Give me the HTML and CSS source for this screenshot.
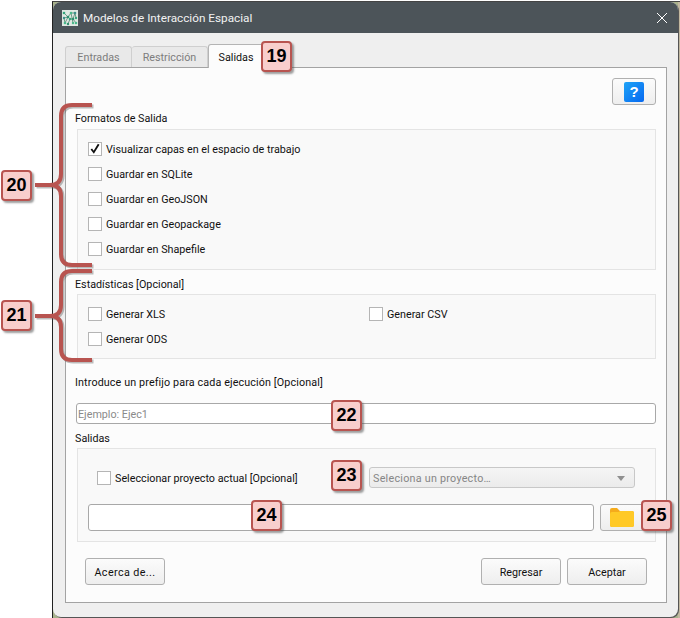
FILE: index.html
```html
<!DOCTYPE html>
<html>
<head>
    <title>Modelos de Interacción Espacial</title>
    <meta charset="UTF-8">
    <link rel="stylesheet" href="styles.css">
</head>

<body>
    <div class="desktop">
        <div class="dialog">
            <div class="titlebar">
                <svg class="logo" width="16" height="16" viewBox="0 0 16 16">
                    <rect width="16" height="16" fill="#dfe8e2"/>
                    <path d="M2 3L6 7L3 13M6 7L9 3L13 3L11 9L14 13M8 9L6 7M8 9L6 14M8 9L11 9M13 3L14 8M9 3L11 13M2 8L6 7M2 8L3 13" stroke="#6f9a86" stroke-width="1" fill="none"/>
                    <circle cx="2" cy="3" r="1.3" fill="#35a67c"/>
                    <circle cx="6" cy="7" r="1.3" fill="#2f8f6f"/>
                    <circle cx="9" cy="3" r="1.3" fill="#4bb98b"/>
                    <circle cx="13" cy="3" r="1.3" fill="#3d8f8a"/>
                    <circle cx="2" cy="8" r="1.2" fill="#3d8f8a"/>
                    <circle cx="3" cy="13" r="1.3" fill="#4bb98b"/>
                    <circle cx="8" cy="9" r="1.3" fill="#35a67c"/>
                    <circle cx="11" cy="9" r="1.3" fill="#2f8f6f"/>
                    <circle cx="14" cy="8" r="1.2" fill="#35a67c"/>
                    <circle cx="6" cy="14" r="1.2" fill="#2f8f6f"/>
                    <circle cx="11" cy="13" r="1.2" fill="#4bb98b"/>
                    <circle cx="14" cy="13" r="1.3" fill="#4bb98b"/>
                </svg>
                <span class="title">Modelos de Interacción Espacial</span>
                <svg class="close" width="12" height="12" viewBox="0 0 12 12">
                    <path d="M1 1L11 11M11 1L1 11" stroke="#fff" stroke-width="1"/>
                </svg>
            </div>

            <div class="content">
                <div class="tabs">
                    <div class="tab tab-first">Entradas</div>
                    <div class="tab tab-second">Restricción</div>
                    <div class="tab tab-active">Salidas</div>
                </div>

                <div class="pane">
                    <div class="help-row">
                        <button type="button" class="btn help-btn"><span class="help-icon">?</span></button>
                    </div>

                    <div class="group-label label-formats">Formatos de Salida</div>
                    <div class="group group-formats">
                        <div class="check-row"><span class="check"><svg width="13" height="13" viewBox="0 0 13 13"><path d="M2.5 7L5.2 10.5L10.5 2" stroke="#111" stroke-width="2" fill="none"/></svg></span><span class="check-text">Visualizar capas en el espacio de trabajo</span></div>
                        <div class="check-row"><span class="check"></span><span class="check-text">Guardar en SQLite</span></div>
                        <div class="check-row"><span class="check"></span><span class="check-text">Guardar en GeoJSON</span></div>
                        <div class="check-row"><span class="check"></span><span class="check-text">Guardar en Geopackage</span></div>
                        <div class="check-row"><span class="check"></span><span class="check-text">Guardar en Shapefile</span></div>
                    </div>

                    <div class="group-label label-stats">Estadísticas [Opcional]</div>
                    <div class="group group-stats">
                        <div class="check-row"><span class="check"></span><span class="check-text">Generar XLS</span></div>
                        <div class="check-row"><span class="check"></span><span class="check-text">Generar CSV</span></div>
                        <div class="check-row"><span class="check"></span><span class="check-text">Generar ODS</span></div>
                    </div>

                    <div class="group-label label-prefix">Introduce un prefijo para cada ejecución [Opcional]</div>
                    <input type="text" class="field prefix-field" placeholder="Ejemplo: Ejec1">

                    <div class="group-label label-output">Salidas</div>
                    <div class="group group-output">
                        <div class="project-row">
                            <div class="check-row project-check"><span class="check"></span><span class="check-text">Seleccionar proyecto actual [Opcional]</span></div>
                            <div class="combo">
                                <span>Seleciona un proyecto…</span>
                                <span class="arrow"></span>
                            </div>
                        </div>
                        <div class="path-row">
                            <input type="text" class="field path-field">
                            <button type="button" class="btn folder-btn">
                                <svg width="24" height="19" viewBox="0 0 24 19">
                                    <path d="M0 2a2 2 0 0 1 2-2h5l3 3h12a2 2 0 0 1 2 2v12a2 2 0 0 1-2 2H2a2 2 0 0 1-2-2z" fill="#f5ab1c"/>
                                    <path d="M0 6a2 2 0 0 1 2-2h7l1-1h12a2 2 0 0 1 2 2v12a2 2 0 0 1-2 2H2a2 2 0 0 1-2-2z" fill="#ffc926"/>
                                </svg>
                            </button>
                        </div>
                    </div>

                    <div class="footer">
                        <button type="button" class="btn footer-btn about-btn">Acerca de...</button>
                        <div class="footer-right">
                            <button type="button" class="btn footer-btn">Regresar</button>
                            <button type="button" class="btn footer-btn">Aceptar</button>
                        </div>
                    </div>
                </div>
            </div>
        </div>
    </div>

    <!-- callouts drawn over the screenshot -->
    <svg class="brackets" width="680" height="618" viewBox="0 0 680 618">
        <g class="bracket-shadow" transform="translate(1.5 1.5)">
            <path d="M92 105H72Q61 105 61 116V174Q61 185 50 185H35M50 185Q61 185 61 196V254Q61 265 72 265H92"/>
            <path d="M92 271H72Q61 271 61 282V305Q61 316 50 316H35M50 316Q61 316 61 327V349Q61 360 72 360H92"/>
        </g>
        <g class="bracket-line">
            <path d="M92 105H72Q61 105 61 116V174Q61 185 50 185H35M50 185Q61 185 61 196V254Q61 265 72 265H92"/>
            <path d="M92 271H72Q61 271 61 282V305Q61 316 50 316H35M50 316Q61 316 61 327V349Q61 360 72 360H92"/>
        </g>
    </svg>
    <div class="badge badge-19">19</div>
    <div class="badge badge-20">20</div>
    <div class="badge badge-21">21</div>
    <div class="badge badge-22">22</div>
    <div class="badge badge-23">23</div>
    <div class="badge badge-24">24</div>
    <div class="badge badge-25">25</div>
</body>
</html>
```

FILE: styles.css
```css
html, body {
    margin: 0;
    padding: 0;
}

body {
    position: relative;
    width: 680px;
    height: 618px;
    overflow: hidden;
    background-color: #fff;
    font-family: Roboto, sans-serif;
    font-size: 10.75px;
    color: #111;
}

.desktop {
    box-sizing: border-box;
    width: 628px;
    height: 617px;
    margin: 1px 0 0 52px;
    border-left: 1px solid #222;
    border-top: 1px solid #444;
    background: repeating-linear-gradient(90deg, #a8b28c 0, #a8b28c 30px, #c2b8a0 30px, #c2b8a0 60px, #8d9c78 60px, #8d9c78 85px);
}

.dialog {
    display: flex;
    flex-direction: column;
    width: 625px;
    height: 615px;
    border-radius: 8px;
    overflow: hidden;
    background-color: #efefef;
    box-shadow: 1px 1px 0 #555;
}

.titlebar {
    display: flex;
    align-items: center;
    flex-shrink: 0;
    height: 31px;
    padding: 0 9px;
    background-color: #4c5459;
    color: #f2f2f2;
}

.logo {
    margin-right: 5px;
}

.title {
    font-size: 11.75px;
}

.close {
    margin-left: auto;
    margin-right: 1px;
}

.content {
    padding: 11px 11px 0 12px;
}

.tabs {
    display: flex;
    align-items: flex-end;
    height: 23px;
}

.tab {
    box-sizing: border-box;
    display: flex;
    align-items: center;
    justify-content: center;
    height: 21px;
    padding-top: 1px;
    border: 1px solid #cfcfcf;
    border-bottom: none;
    border-radius: 3px 3px 0 0;
    background-color: #e9e9e9;
    color: #7d7d7d;
}

.tab-first {
    width: 67px;
}

.tab-second {
    width: 76px;
    border-left: none;
}

.tab-active {
    width: 66px;
    height: 24px;
    margin-bottom: -1px;
    position: relative;
    border-color: #b4b4b4;
    background-color: #fcfcfc;
    color: #111;
    padding-right: 10px;
}

.pane {
    box-sizing: border-box;
    width: 602px;
    height: 536px;
    padding: 0 10px 0 9px;
    border: 1px solid #a3a3a3;
    background-color: #fcfcfc;
}

.help-row {
    display: flex;
    justify-content: flex-end;
    padding-top: 10px;
}

.btn {
    box-sizing: border-box;
    border: 1px solid #b0b0b0;
    border-radius: 3px;
    background: linear-gradient(#fbfbfb, #eeeeee);
    font-family: Roboto, sans-serif;
    font-size: 10.75px;
    color: #111;
    padding: 0;
}

.help-btn {
    display: flex;
    align-items: center;
    justify-content: center;
    width: 44px;
    height: 27px;
}

.help-icon {
    display: block;
    width: 20px;
    height: 20px;
    border-radius: 2px;
    background: linear-gradient(135deg, #1fa4f7, #0668f0);
    color: #fff;
    font-family: "Liberation Sans", sans-serif;
    font-size: 15px;
    font-weight: bold;
    line-height: 20px;
    text-align: center;
}

.group-label {
    height: 16px;
    line-height: 18px;
}

.label-formats {
    margin-top: 5px;
}

.label-stats {
    margin-top: 6px;
}

.label-prefix {
    margin-top: 15px;
    letter-spacing: 0.12px;
}

.label-output {
    margin-top: 6px;
}

.group {
    box-sizing: border-box;
    margin-left: 2px;
    border: 1px solid #e4e4e4;
    background-color: #f9f9f9;
}

.group-formats {
    height: 141px;
    margin-top: 3px;
    padding: 6px 0 0 10px;
}

.group-stats {
    display: grid;
    grid-template-columns: 281px 1fr;
    grid-auto-rows: 25px;
    height: 65px;
    margin-top: 2px;
    padding: 6px 0 0 10px;
}

.group-output {
    height: 94px;
    margin-top: 2px;
    padding: 18px 10px 0 10px;
}

.check-row {
    display: flex;
    align-items: center;
    height: 25px;
}

.check {
    box-sizing: border-box;
    display: flex;
    align-items: center;
    justify-content: center;
    width: 14px;
    height: 14px;
    margin-right: 4px;
    border: 1px solid #b5b5b5;
    background-color: #fff;
}

.check-text {
    padding-top: 1px;
}

.field {
    display: block;
    box-sizing: border-box;
    border: 1px solid #a8a8a8;
    border-radius: 3px;
    background-color: #fff;
    font-family: Roboto, sans-serif;
    font-size: 10.75px;
    padding: 1px 1px 0 1px;
    outline: none;
}

.field::placeholder {
    color: #8a8a8a;
}

.prefix-field {
    width: 580px;
    height: 21px;
    margin: 13px 0 0 1px;
}

.project-row {
    display: flex;
    align-items: center;
    height: 21px;
}

.project-check {
    margin-left: 9px;
}

.combo {
    box-sizing: border-box;
    display: flex;
    align-items: center;
    justify-content: space-between;
    width: 266px;
    height: 21px;
    margin-left: auto;
    margin-right: 10px;
    padding: 1px 9px 0 3px;
    border: 1px solid #c8c8c8;
    border-radius: 3px;
    background: linear-gradient(#f5f5f5, #ebebeb);
    color: #868686;
    letter-spacing: 0.25px;
}

.arrow {
    width: 0;
    height: 0;
    border-left: 4px solid transparent;
    border-right: 4px solid transparent;
    border-top: 5px solid #8f8f8f;
}

.path-row {
    display: flex;
    gap: 6px;
    margin-top: 16px;
}

.path-field {
    width: 506px;
    height: 27px;
}

.folder-btn {
    display: flex;
    align-items: center;
    flex: 1;
    height: 27px;
    padding-left: 9px;
}

.footer {
    display: flex;
    justify-content: space-between;
    margin-top: 16px;
    padding: 0 9px 0 10px;
}

.footer-right {
    display: flex;
    gap: 6px;
}

.footer-btn {
    width: 80px;
    height: 27px;
    padding-top: 1px;
}

.about-btn {
    letter-spacing: 0.4px;
}

/* callouts, these sit on top of the dialog */
.brackets {
    position: absolute;
    left: 0;
    top: 0;
    pointer-events: none;
}

.brackets path {
    fill: none;
    stroke-width: 4;
}

.bracket-shadow path {
    stroke: rgba(90, 90, 90, 0.4);
}

.bracket-line path {
    stroke: #b85450;
}

.badge {
    position: absolute;
    box-sizing: border-box;
    display: flex;
    align-items: center;
    justify-content: center;
    width: 31px;
    height: 31px;
    border: 2px solid #b85450;
    border-radius: 4px;
    background-color: #f8cecc;
    box-shadow: 2px 2px 2px rgba(80, 80, 80, 0.55);
    font-family: "Liberation Sans", sans-serif;
    font-size: 18px;
    font-weight: bold;
    color: #000;
}

.badge-19 { left: 261px; top: 41px; }
.badge-20 { left: 1px; top: 170px; }
.badge-21 { left: 1px; top: 300px; }
.badge-22 { left: 331px; top: 400px; }
.badge-23 { left: 331px; top: 460px; }
.badge-24 { left: 251px; top: 500px; }
.badge-25 { left: 641px; top: 500px; }
```
